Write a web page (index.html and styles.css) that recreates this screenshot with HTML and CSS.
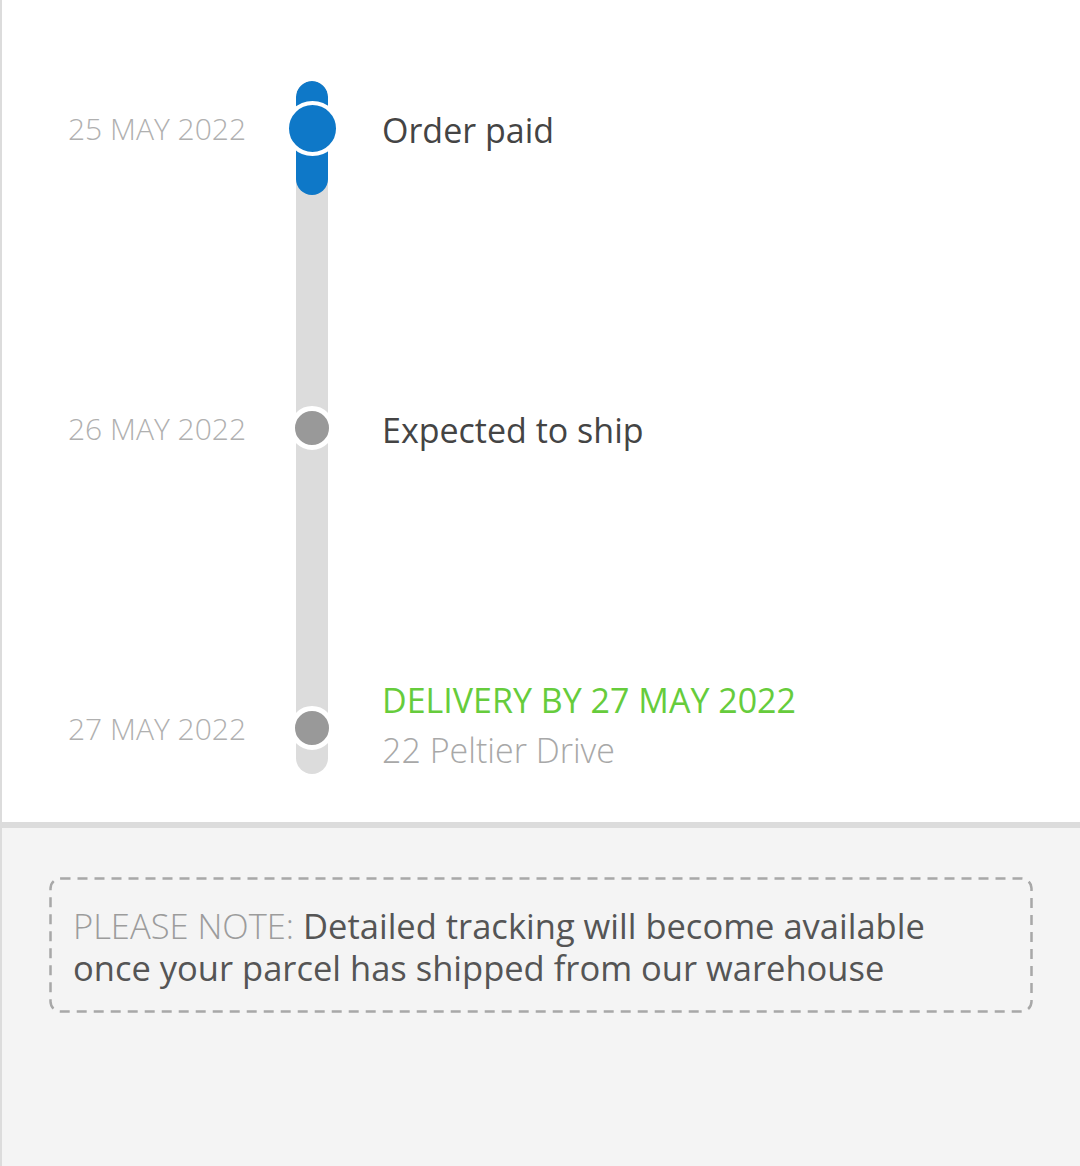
FILE: index.html
```html
<!DOCTYPE html>
<html lang="en">
<head>
  <meta charset="UTF-8">
  <meta name="viewport" content="width=device-width, initial-scale=1.0">
  <title>Order tracking</title>
  <link rel="stylesheet" href="styles.css">
</head>
<body>
  <div class="page">
    <div class="tracking">
      <div class="timeline">
        <div class="track"><div class="progress"></div></div>

        <div class="row">
          <div class="date">25 MAY 2022</div>
          <div class="marker"><span class="dot active"></span></div>
          <div class="info">
            <div class="title">Order paid</div>
          </div>
        </div>

        <div class="row">
          <div class="date">26 MAY 2022</div>
          <div class="marker"><span class="dot"></span></div>
          <div class="info">
            <div class="title">Expected to ship</div>
          </div>
        </div>

        <div class="row last">
          <div class="date">27 MAY 2022</div>
          <div class="marker"><span class="dot"></span></div>
          <div class="info">
            <div class="title green">DELIVERY BY 27 MAY 2022</div>
            <div class="address">22 Peltier Drive</div>
          </div>
        </div>
      </div>
    </div>

    <div class="notes">
      <div class="note-box">
        <span class="note-label">PLEASE NOTE:</span> Detailed tracking will become available once your parcel has shipped from our warehouse
      </div>
    </div>
  </div>
</body>
</html>
```

FILE: styles.css
```css
body {
  margin: 0;
  font-family: "Open Sans", "Noto Sans", sans-serif;
  background-color: #f4f4f4;
}

.page {
  border-left: 2px solid #dcdcdc;
  min-height: 1166px;
  box-sizing: border-box;
}

.tracking {
  background-color: #ffffff;
  height: 822px;
  border-bottom: 6px solid #dcdcdc;
}

.timeline {
  position: relative;
  padding-top: 78px;
  display: flex;
  flex-direction: column;
  gap: 200px;
}

.track {
  position: absolute;
  left: 294px;
  top: 81px;
  width: 32px;
  height: 693px;
  border-radius: 16px;
  background-color: #dcdcdc;
  overflow: hidden;
}

.progress {
  height: 114px;
  background-color: #0e78c8;
  border-radius: 16px;
}

.row {
  position: relative;
  display: grid;
  grid-template-columns: 212px 64px 1fr;
  align-items: center;
  height: 100px;
  padding-left: 66px;
}

.date {
  font-size: 30px;
  font-weight: 300;
  color: #b0b0b0;
  white-space: nowrap;
}

.marker {
  display: flex;
  justify-content: center;
}

.dot {
  width: 34px;
  height: 34px;
  border-radius: 50%;
  background-color: #999999;
  border: 5px solid #ffffff;
}

.dot.active {
  width: 47px;
  height: 47px;
  border-width: 4px;
  background-color: #0e78c8;
}

.info {
  padding-left: 38px;
}

.title {
  font-size: 34px;
  color: #444444;
  white-space: nowrap;
  padding-top: 3px;
}

.title.green {
  color: #66cc3c;
  line-height: 50px;
  padding-top: 0;
}

.address {
  font-size: 34px;
  font-weight: 300;
  color: #a8a8a8;
  line-height: 50px;
}

.row.last .info {
  margin-top: -6px;
}

.notes {
  padding: 49px 47px 0 47px;
}

.note-box {
  background-image: url("data:image/svg+xml,%3Csvg xmlns='http://www.w3.org/2000/svg' width='100%25' height='100%25'%3E%3Crect x='1.5' y='1.5' width='calc(100%25 - 3px)' height='calc(100%25 - 3px)' rx='10' ry='10' fill='none' stroke='%23a8a8a8' stroke-width='2.5' stroke-dasharray='10 7'/%3E%3C/svg%3E");
  border-radius: 10px;
  padding: 28px 78px 24px 24px;
  font-size: 34.5px;
  line-height: 42px;
  color: #555555;
}

.note-label {
  color: #9c9c9c;
  font-weight: 300;
}
```
